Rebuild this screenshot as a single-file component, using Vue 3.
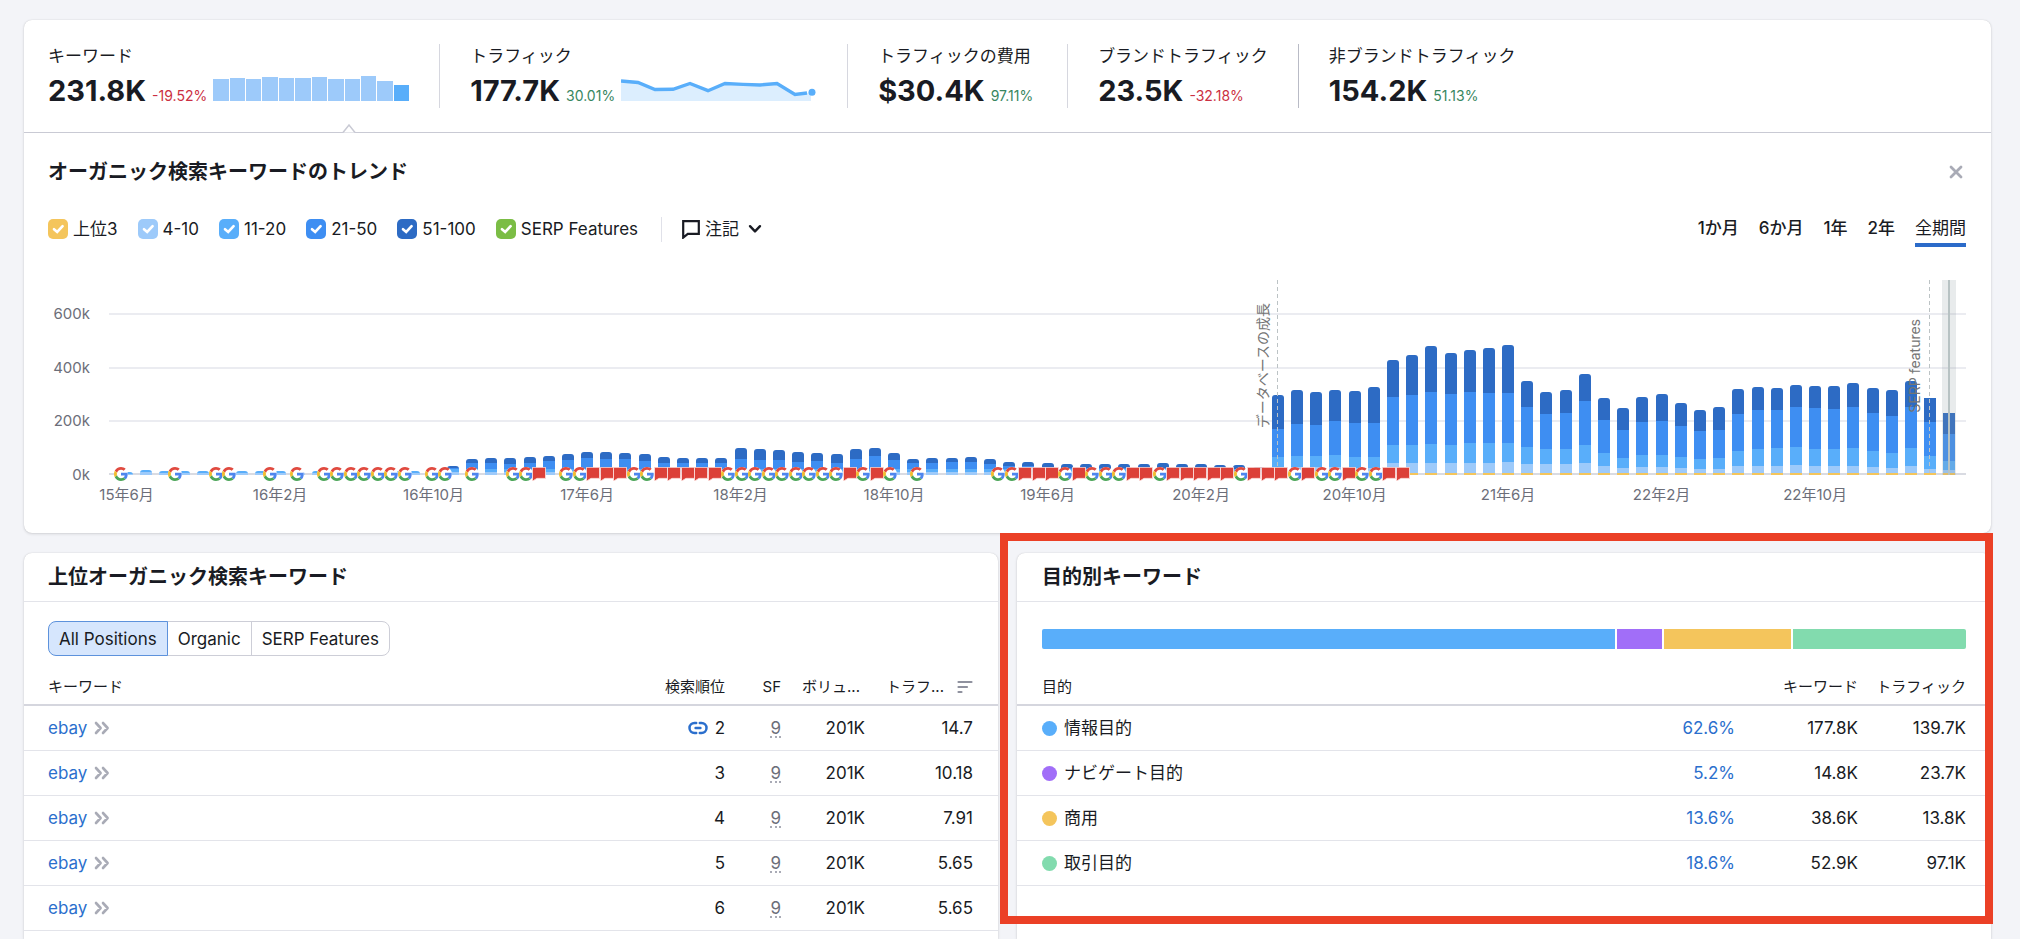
<script setup>
import { ref } from 'vue'

const keywordSpark = [22, 23, 22, 24, 23, 23, 24, 22, 22, 25, 20, 16]

const kpis = [
  { label: 'キーワード', value: '231.8K', delta: '-19.52%', down: true, spark: 'bars' },
  { label: 'トラフィック', value: '177.7K', delta: '30.01%', spark: 'line' },
  { label: 'トラフィックの費用', value: '$30.4K', delta: '97.11%', wide: true },
  { label: 'ブランドトラフィック', value: '23.5K', delta: '-32.18%', down: true },
  { label: '非ブランドトラフィック', value: '154.2K', delta: '51.13%' },
]

const legend = ref([
  { id: 'top3', label: '上位3', color: 'amber', on: true },
  { id: 'p4', label: '4-10', color: 'pale', on: true },
  { id: 'p11', label: '11-20', color: 'sky', on: true },
  { id: 'p21', label: '21-50', color: 'blue', on: true },
  { id: 'p51', label: '51-100', color: 'navy', on: true },
  { id: 'serp', label: 'SERP Features', color: 'green', on: true },
])

const ranges = ['1か月', '6か月', '1年', '2年', '全期間']
const range = ref('全期間')

/* Chart scale: 585 units over the full plot height, 160.5 units per 200k. */
const FULL = 585
const yTicks = [
  { label: '600k', at: 482 },
  { label: '400k', at: 321 },
  { label: '200k', at: 161 },
  { label: '0k', at: 0 },
]

/* Cumulative tops per month: 51-100, 21-50, 11-20, 4-10. */
const early = [
  8, 15, 12, 11, 11, 11, 12, 11, 12, 9, 11, 11, 11, 11, 12, 13, 13,
].map((t) => [t, t, t, Math.round(t * 0.5)])
const rising = [
  [28, 20], [49, 37], [51, 36], [51, 34], [55, 36], [58, 41], [64, 44], [70, 52],
  [68, 49], [66, 47], [63, 43], [54, 37], [52, 35], [52, 35], [52, 35], [81, 48],
  [77, 45], [76, 45], [69, 40], [67, 42], [63, 37], [77, 49], [81, 58], [67, 46],
  [49, 36], [50, 37], [52, 39], [54, 40], [47, 33], [40, 28], [40, 26], [37, 25],
  [34, 22], [34, 22], [34, 22], [32, 20], [33, 20], [36, 22], [33, 20], [32, 20],
  [30, 18], [29, 17], [25, 14],
].map(([a, b]) => [a, b, Math.min(17, b), 8])
const late = [
  [241, 138, 53, 23], [255, 153, 58, 24], [250, 151, 57, 24], [255, 161, 60, 24],
  [252, 155, 54, 22], [264, 156, 54, 22], [345, 234, 90, 36], [359, 241, 90, 36],
  [387, 249, 93, 37], [366, 242, 90, 35], [374, 249, 95, 36], [382, 246, 95, 36],
  [389, 247, 97, 38], [281, 203, 83, 34], [248, 182, 78, 33], [255, 186, 77, 32],
  [304, 222, 90, 36], [230, 165, 66, 27], [200, 136, 51, 22], [235, 160, 61, 24],
  [243, 162, 60, 24], [217, 147, 53, 21], [195, 131, 48, 18], [205, 136, 51, 19],
  [257, 183, 72, 27], [265, 195, 79, 28], [261, 195, 80, 28], [271, 204, 84, 30],
  [268, 201, 79, 28], [268, 198, 78, 27], [277, 204, 82, 28], [260, 186, 72, 24],
  [254, 177, 66, 21], [283, 204, 80, 27], [232, 160, 57, 18], [186, 124, 43, 16],
]
const bars = [...early, ...rising, ...late].map(([a, b, c, d], i) => {
  const floor = i >= 60 ? 5 : 0
  return {
    height: (a / FULL) * 100,
    square: i >= 94,
    parts: [
      { color: 'navy', size: a - b },
      { color: 'blue', size: b - c },
      { color: 'sky', size: c - d },
      { color: 'pale', size: d - floor },
      { color: 'amber', size: floor },
    ].filter((p) => p.size > 0),
  }
})

const months = [
  '15年6月', '16年2月', '16年10月', '17年6月', '18年2月', '18年10月',
  '19年6月', '20年2月', '20年10月', '21年6月', '22年2月', '22年10月',
]
const monthCentre = (i) => ((i + 0.5) / 96) * 100

/* G = search update, n = note, . = nothing */
const noteTrack =
  'G...G..GG..G.G.GGGGGGG.GG.G..GGn.GGnnnGGnnnnnGGGGGGGGGnGnG.G.....GGnnnGnGGGnnGnnnnnGnnnGnGGnGGnn'
const notes = [...noteTrack]
  .map((kind, k) => ({ kind, left: ((4.4 + 13.487 * k) / 1842) * 100 }))
  .filter((n) => n.kind !== '.')

const filters = ['All Positions', 'Organic', 'SERP Features']
const filter = ref('All Positions')

const rows = [
  { rank: 2, linked: true, sf: 9, volume: '201K', traffic: '14.7' },
  { rank: 3, sf: 9, volume: '201K', traffic: '10.18' },
  { rank: 4, sf: 9, volume: '201K', traffic: '7.91' },
  { rank: 5, sf: 9, volume: '201K', traffic: '5.65' },
  { rank: 6, sf: 9, volume: '201K', traffic: '5.65' },
]

const intents = [
  { name: '情報目的', color: 'sky', share: '62.6%', keywords: '177.8K', traffic: '139.7K', weight: 574 },
  { name: 'ナビゲート目的', color: 'violet', share: '5.2%', keywords: '14.8K', traffic: '23.7K', weight: 45 },
  { name: '商用', color: 'amber', share: '13.6%', keywords: '38.6K', traffic: '13.8K', weight: 128 },
  { name: '取引目的', color: 'mint', share: '18.6%', keywords: '52.9K', traffic: '97.1K', weight: 173 },
]
</script>

<template>
  <main class="page">
    <section class="card overview">
      <div class="kpis">
        <div v-for="k in kpis" :key="k.label" class="kpi" :class="{ wide: k.wide }">
          <div class="kpi-label">{{ k.label }}</div>
          <div class="kpi-row">
            <span class="kpi-value">{{ k.value }}</span>
            <span class="kpi-delta" :class="{ down: k.down }">{{ k.delta }}</span>
            <div v-if="k.spark === 'bars'" class="spark-bars">
              <i v-for="(h, i) in keywordSpark" :key="i" :style="{ height: h + 'px' }"></i>
            </div>
            <svg v-if="k.spark === 'line'" class="spark-line" width="196" height="26" viewBox="0 0 196 26">
              <path fill="#dceefe" d="M0 5.5 17 7 34 14.5 52 14.3 69 8 87 15.7 104 8 122 9 139 10 156 8 174 19.5 190 17.5V26H0Z" />
              <path fill="none" stroke="#59aefa" stroke-width="3.4" d="M0 6 17 7.5 34 14.5 52 14.3 69 8.5 87 15.7 104 8.5 122 9.4 139 10 156 8.5 174 19.5 186 18" />
              <circle cx="191" cy="17.3" r="3.5" fill="#59aefa" />
            </svg>
          </div>
        </div>
        <svg class="notch" width="14" height="9" viewBox="0 0 14 9">
          <path d="M1 8.5 7 1l6 7.5" fill="#fff" stroke="#c9cad4" stroke-width="1.5" />
        </svg>
      </div>

      <div class="trend">
        <div class="trend-head">
          <h2>オーガニック検索キーワードのトレンド</h2>
          <button class="close" type="button" aria-label="閉じる">
            <svg width="14" height="14" viewBox="0 0 14 14">
              <path d="M2 2l10 10M12 2 2 12" stroke="#a9abb6" stroke-width="2.8" stroke-linecap="round" />
            </svg>
          </button>
        </div>

        <div class="toolbar">
          <div class="legend">
            <label v-for="l in legend" :key="l.id" :for="l.id" class="check">
              <span class="box">
                <input :id="l.id" v-model="l.on" type="checkbox" :class="l.color" />
                <svg v-if="l.on" width="20" height="20" viewBox="0 0 20 20">
                  <path d="M6 10.2 9.2 13 14.6 7.2" fill="none" stroke="#fff" stroke-width="2.6" stroke-linecap="round" />
                </svg>
              </span>
              {{ l.label }}
            </label>
            <button class="notes" type="button">
              <svg width="18" height="20" viewBox="0 0 18 20">
                <path d="M1.2 2.2H16.8V14.8H5.8L1.2 18.6Z" fill="none" stroke="#191b23" stroke-width="2.2" />
              </svg>
              注記
              <svg class="chev" width="14" height="10" viewBox="0 0 14 10">
                <path d="M2 2.2 7 7.4l5-5.2" fill="none" stroke="#191b23" stroke-width="2.4" stroke-linecap="round" stroke-linejoin="round" />
              </svg>
            </button>
          </div>
          <div class="ranges">
            <button v-for="r in ranges" :key="r" type="button" :class="{ active: r === range }" @click="range = r">{{ r }}</button>
          </div>
        </div>

        <div class="chart">
          <div class="y-axis">
            <span v-for="t in yTicks" :key="t.label" :style="{ bottom: (t.at / FULL) * 100 + '%' }">{{ t.label }}</span>
          </div>
          <div class="plot">
            <i v-for="t in yTicks" :key="t.label" class="grid-line" :class="{ base: t.at === 0 }" :style="{ bottom: (t.at / FULL) * 100 + '%' }"></i>
            <div class="track">
              <div v-for="(b, i) in bars" :key="i" class="slot">
                <div class="bar" :class="{ square: b.square }" :style="{ height: b.height + '%' }">
                  <i v-for="p in b.parts" :key="p.color" :class="p.color" :style="{ flexGrow: p.size }"></i>
                </div>
              </div>
              <div class="marker" :style="{ left: monthCentre(60) + '%' }"><span class="db">データベースの成長</span></div>
              <div class="marker" :style="{ left: monthCentre(94) + '%' }"><span class="sf">SERP features</span></div>
              <div class="hover" :style="{ left: monthCentre(95) + '%' }"></div>
              <svg v-for="n in notes" :key="n.left" class="note" :style="{ left: n.left + '%' }" width="14" height="14" viewBox="0 0 48 48">
                <template v-if="n.kind === 'G'">
                  <circle cx="24" cy="24" r="24" fill="#fff" />
                  <path fill="#e04a3f" d="M24 9.5c3.54 0 6.71 1.22 9.21 3.6l6.85-6.85C35.9 2.38 30.47 0 24 0 14.62 0 6.51 5.38 2.56 13.22l7.98 6.19C12.43 13.72 17.74 9.5 24 9.5z" />
                  <path fill="#4e86ee" d="M46.98 24.55c0-1.57-.15-3.09-.38-4.55H24v9.02h12.94c-.58 2.96-2.26 5.48-4.78 7.18l7.73 6c4.51-4.18 7.09-10.36 7.09-17.65z" />
                  <path fill="#f3bc2e" d="M10.53 28.59c-.48-1.45-.76-2.99-.76-4.59s.27-3.14.76-4.59l-7.98-6.19C.92 16.46 0 20.12 0 24c0 3.88.92 7.54 2.56 10.78l7.97-6.19z" />
                  <path fill="#4ca558" d="M24 48c6.48 0 11.93-2.13 15.89-5.81l-7.73-6c-2.15 1.45-4.92 2.3-8.16 2.3-6.26 0-11.57-4.22-13.47-9.91l-7.98 6.19C6.51 42.62 14.62 48 24 48z" />
                </template>
                <path v-else fill="#dc4038" stroke="#fbe3e1" stroke-width="3" d="M1.5 1H46.5V39H17L4 47H1.5Z" />
              </svg>
              <span v-for="(m, i) in months" :key="m" class="x-label" :style="{ left: monthCentre(i * 8) + '%' }">{{ m }}</span>
            </div>
          </div>
        </div>
      </div>
    </section>

    <div class="columns">
      <section class="card keywords">
        <h2 class="card-title">上位オーガニック検索キーワード</h2>
        <div class="strip">
          <div class="pills">
            <button v-for="f in filters" :key="f" type="button" :class="{ active: f === filter }" @click="filter = f">{{ f }}</button>
          </div>
        </div>
        <table>
          <colgroup>
            <col />
            <col class="w-rank" />
            <col class="w-sf" />
            <col class="w-volume" />
            <col class="w-last" />
          </colgroup>
          <thead>
            <tr>
              <th class="left">キーワード</th>
              <th>検索順位</th>
              <th>SF</th>
              <th class="clipped">ボリュ...</th>
              <th class="clipped">
                <div class="sorted">
                  トラフ...
                  <svg width="16" height="14" viewBox="0 0 16 14">
                    <path d="M1.5 2h13M1.5 7h8.5M1.5 12h3" stroke="#8f919e" stroke-width="2.2" stroke-linecap="round" />
                  </svg>
                </div>
              </th>
            </tr>
          </thead>
          <tbody>
            <tr v-for="r in rows" :key="r.rank">
              <td class="left">
                <a href="#">ebay</a>
                <svg class="more" width="16" height="14" viewBox="0 0 16 14">
                  <path d="M2 2l4.6 5L2 12M9 2l4.6 5L9 12" fill="none" stroke="#a9abb6" stroke-width="2.6" stroke-linecap="round" stroke-linejoin="round" />
                </svg>
              </td>
              <td>
                <svg v-if="r.linked" class="link" width="20" height="14" viewBox="0 0 20 14">
                  <path d="M8.2 2H6.5a5 5 0 0 0 0 10H8.2M11.8 2h1.7a5 5 0 0 1 0 10H11.8M7.6 7h4.8" fill="none" stroke="#2b6fcd" stroke-width="2.5" stroke-linecap="round" />
                </svg>
                {{ r.rank }}
              </td>
              <td><span class="dotted">{{ r.sf }}</span></td>
              <td>{{ r.volume }}</td>
              <td>{{ r.traffic }}</td>
            </tr>
          </tbody>
        </table>
      </section>

      <section class="card intent">
        <h2 class="card-title">目的別キーワード</h2>
        <div class="strip">
          <div class="stack">
            <i v-for="n in intents" :key="n.name" :class="n.color" :style="{ flexGrow: n.weight }"></i>
          </div>
        </div>
        <table>
          <colgroup>
            <col />
            <col class="w-share" />
            <col class="w-keywords" />
            <col class="w-last" />
          </colgroup>
          <thead>
            <tr>
              <th class="left">目的</th>
              <th></th>
              <th>キーワード</th>
              <th>トラフィック</th>
            </tr>
          </thead>
          <tbody>
            <tr v-for="n in intents" :key="n.name">
              <td class="left"><span class="name"><i class="dot" :class="n.color"></i>{{ n.name }}</span></td>
              <td><a href="#">{{ n.share }}</a></td>
              <td>{{ n.keywords }}</td>
              <td>{{ n.traffic }}</td>
            </tr>
          </tbody>
        </table>
        <div class="frame"></div>
      </section>
    </div>
  </main>
</template>

<style>
body {
  background: #f3f4f8;
}
</style>

<style scoped>
.page {
  box-sizing: border-box;
  display: flex;
  flex-direction: column;
  gap: 20px;
  height: 100vh;
  padding: 20px 29px 0 24px;
  overflow: hidden;
  color: #191b23;
  font: 17px/24px Inter, "Noto Sans CJK JP", sans-serif;
}
.page *,
.page *::before {
  box-sizing: border-box;
}
button {
  margin: 0;
  padding: 0;
  border: 0;
  background: none;
  color: inherit;
  font: inherit;
  cursor: pointer;
}
svg {
  display: block;
  flex: none;
}
h2 {
  margin: 0;
  font-size: 20px;
  line-height: 28px;
  font-weight: 700;
}
a {
  color: #2b6fcd;
  text-decoration: none;
}
.card {
  border-radius: 8px;
  background: #fff;
  box-shadow: 0 0 1px rgba(25, 27, 35, 0.2), 0 1px 3px rgba(25, 27, 35, 0.14);
}

.amber { background: #f4c55c; }
.pale { background: #9dcafa; }
.sky { background: #59aefa; }
.blue { background: #3e8ef2; }
.navy { background: #2d6bc4; }
.green { background: #7bbd45; }
.violet { background: #a16ef8; }
.mint { background: #82dbae; }

.kpis {
  position: relative;
  display: flex;
  padding: 24px;
  border-bottom: 1px solid #c9cad4;
}
.kpi {
  height: 64px;
  padding: 0 30px;
  border-left: 1px solid #d6d7df;
}
.kpi:first-child {
  padding-left: 0;
  border-left: 0;
}
.kpi:last-of-type {
  border-left-color: #b9bbc6;
}
.kpi.wide {
  min-width: 220px;
}
.kpi-label {
  line-height: 24px;
}
.kpi-row {
  display: flex;
  align-items: baseline;
  gap: 6px;
  margin-top: 5px;
}
.kpi-value {
  font-size: 29px;
  line-height: 36px;
  font-weight: 700;
}
.kpi-delta {
  color: #38865f;
  font-size: 14px;
  line-height: 20px;
}
.kpi-delta.down {
  color: #cb2f42;
}
.spark-bars {
  display: flex;
  align-items: flex-end;
  gap: 1px;
  width: 196px;
  height: 26px;
}
.spark-bars i {
  flex: 1;
  background: #9dcafa;
}
.spark-bars i:last-child {
  background: #59aefa;
}
.notch {
  position: absolute;
  left: 318px;
  bottom: -1px;
}

.trend {
  padding: 25px 25px 28px 24px;
}
.trend-head {
  display: flex;
  justify-content: space-between;
  align-items: center;
}
.close {
  padding: 3px;
}
.toolbar {
  display: flex;
  justify-content: space-between;
  margin-top: 27px;
}
.legend {
  display: flex;
  align-items: center;
  gap: 20px;
  height: 32px;
}
.check {
  display: flex;
  align-items: center;
  gap: 5px;
}
.box {
  position: relative;
  width: 20px;
  height: 20px;
}
.box input {
  display: block;
  appearance: none;
  width: 20px;
  height: 20px;
  margin: 0;
  border-radius: 5px;
}
.box svg {
  position: absolute;
  inset: 0;
  pointer-events: none;
}
.notes {
  display: flex;
  align-items: center;
  gap: 5px;
  height: 25px;
  margin-left: 3px;
  padding-left: 20px;
  border-left: 1px solid #e0e1e9;
}
.chev {
  margin-left: 4px;
}
.ranges {
  display: flex;
  gap: 20px;
}
.ranges button {
  line-height: 30px;
  font-weight: 500;
  border-bottom: 4px solid transparent;
}
.ranges .active {
  border-color: #2b6bc9;
  font-weight: 400;
}

.chart {
  display: flex;
  height: 195px;
  margin: 33px 0 30px;
  color: #6c6e79;
  font-size: 15px;
  line-height: 20px;
}
.y-axis {
  position: relative;
  width: 61px;
}
.y-axis span {
  position: absolute;
  right: 19px;
  transform: translateY(50%);
}
.plot {
  position: relative;
  flex: 1;
  padding: 0 7px 0 8px;
}
.grid-line {
  position: absolute;
  left: 0;
  right: 0;
  height: 2px;
  margin-bottom: -1px;
  background: #ebecf1;
}
.grid-line.base {
  margin-bottom: 0;
  background: #d9dbe2;
}
.track {
  position: relative;
  display: flex;
  height: 100%;
}
.slot {
  display: flex;
  flex: 1;
  align-items: flex-end;
  justify-content: center;
}
.bar {
  display: flex;
  flex-direction: column;
  width: 12px;
  border-radius: 3px 3px 0 0;
  overflow: hidden;
}
.bar.square {
  border-radius: 0;
}
.bar i {
  flex: 1 1 0;
}
.marker {
  position: absolute;
  top: 0;
  bottom: 0;
  width: 0;
}
.marker::before {
  content: "";
  position: absolute;
  inset: 0 auto 0 -1px;
  width: 1px;
  background: repeating-linear-gradient(#bcc3c5 0 4px, transparent 4px 7px);
}
.marker span {
  position: absolute;
  right: 5px;
  color: #757575;
  font-size: 14px;
  white-space: nowrap;
  writing-mode: vertical-rl;
  text-orientation: sideways;
  transform: rotate(180deg);
}
.marker .db {
  top: 23px;
}
.marker .sf {
  top: 39px;
}
.hover {
  position: absolute;
  top: 0;
  bottom: 0;
  width: 14px;
  margin-left: -7px;
  background: linear-gradient(90deg, transparent 6px, #b7c2c3 6px 8px, transparent 8px), rgba(140, 155, 158, 0.2);
}
.note {
  position: absolute;
  bottom: -6px;
  margin-left: -7px;
}
.x-label {
  position: absolute;
  top: 205px;
  white-space: nowrap;
  transform: translateX(-50%);
}

.columns {
  display: flex;
  flex: 1;
  gap: 19px;
  min-height: 0;
}
.columns .card {
  flex: 1 1 0;
  min-width: 0;
  border-radius: 8px 8px 0 0;
}
.card-title {
  height: 49px;
  padding: 10px 25px 0;
  border-bottom: 1px solid #e3e4ea;
}
.strip {
  display: flex;
  height: 75px;
  padding: 19px 25px 0;
}
.keywords .card-title,
.keywords .strip,
.keywords .left {
  padding-left: 24px;
}
.pills {
  display: flex;
  height: 35px;
}
.pills button {
  padding: 0 10px;
  border: 1px solid #cdced7;
  margin-left: -1px;
}
.pills button:first-child {
  margin-left: 0;
  border-radius: 8px 0 0 8px;
}
.pills button:last-child {
  border-radius: 0 8px 8px 0;
}
.pills .active {
  position: relative;
  border-color: #5d92dc;
  background: #d6e6fd;
}
.stack {
  display: flex;
  flex: 1;
  gap: 2px;
  height: 20px;
  margin-top: 8px;
  border-radius: 2px;
  overflow: hidden;
}
.stack i {
  flex: 1 1 0;
}

table {
  width: 100%;
  border-collapse: separate;
  border-spacing: 0;
  table-layout: fixed;
}
.w-rank { width: 110px; }
.w-sf { width: 56px; }
.w-volume { width: 84px; }
.w-last { width: 133px; }
.w-share { width: 200px; }
.w-keywords { width: 123px; }
th {
  height: 29px;
  padding: 0 0 8px;
  border-bottom: 2px solid #d5d6de;
  font-size: 15px;
  line-height: 18px;
  font-weight: 400;
  text-align: right;
  white-space: nowrap;
}
td {
  height: 45px;
  padding: 0;
  border-bottom: 1px solid #e3e4ea;
  text-align: right;
  white-space: nowrap;
}
.left {
  padding-left: 25px;
  text-align: left;
}
th:last-child,
td:last-child {
  padding-right: 25px;
}
th.clipped {
  padding-left: 21px;
  text-align: left;
}
.sorted {
  display: flex;
  align-items: center;
  justify-content: space-between;
}
.more {
  display: inline-block;
  margin-left: 7px;
  vertical-align: -1px;
}
.link {
  display: inline-block;
  margin-right: 2px;
  vertical-align: -1px;
}
.dotted {
  display: inline-block;
  border-bottom: 2px dotted #a9abb6;
  color: #6c6e79;
  line-height: 16px;
}
.name {
  display: flex;
  align-items: center;
  gap: 7px;
}
.dot {
  width: 15px;
  height: 15px;
  border-radius: 50%;
}
.intent {
  position: relative;
}
.frame {
  position: absolute;
  inset: -20px -2px 15px -17px;
  border: 8px solid #eb4026;
  pointer-events: none;
}
</style>
